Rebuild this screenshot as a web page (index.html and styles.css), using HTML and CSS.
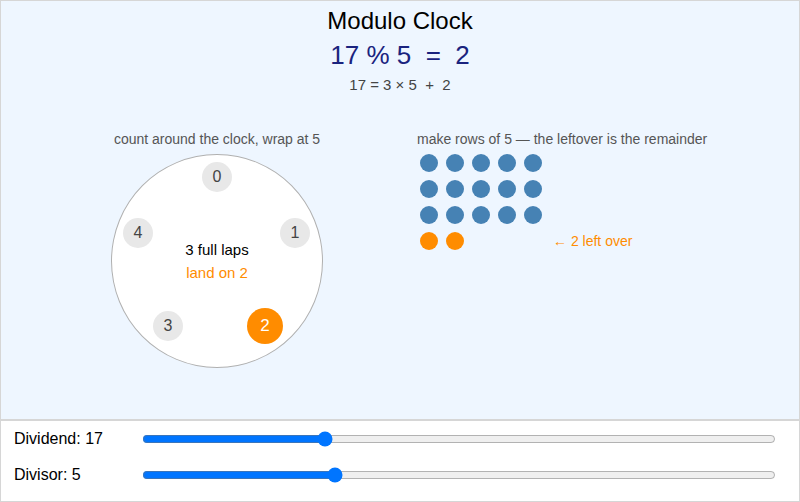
FILE: index.html
```html
<!DOCTYPE html>
<html lang="en">
<head>
    <meta charset="UTF-8">
    <meta name="viewport" content="width=device-width, initial-scale=1.0">
    <title>Modulo Clock</title>
    <link rel="stylesheet" href="styles.css">
</head>
<body>
    <div class="app">
        <div class="stage">
            <h1 class="title">Modulo Clock</h1>
            <div class="equation">17 % 5 &nbsp;= &nbsp;2</div>
            <div class="breakdown">17 = 3 × 5 &nbsp;+ &nbsp;2</div>

            <div class="columns">
                <div class="col clock-col">
                    <div class="caption">count around the clock, wrap at 5</div>
                    <div class="clock">
                        <div class="node n0">0</div>
                        <div class="node n1">1</div>
                        <div class="node n2 hit">2</div>
                        <div class="node n3">3</div>
                        <div class="node n4">4</div>
                        <div class="clock-center">
                            <div class="laps">3 full laps</div>
                            <div class="land">land on 2</div>
                        </div>
                    </div>
                </div>

                <div class="col rows-col">
                    <div class="caption">make rows of 5 — the leftover is the remainder</div>
                    <div class="dot-rows">
                        <div class="dot-row"><span class="dot"></span><span class="dot"></span><span class="dot"></span><span class="dot"></span><span class="dot"></span></div>
                        <div class="dot-row"><span class="dot"></span><span class="dot"></span><span class="dot"></span><span class="dot"></span><span class="dot"></span></div>
                        <div class="dot-row"><span class="dot"></span><span class="dot"></span><span class="dot"></span><span class="dot"></span><span class="dot"></span></div>
                        <div class="dot-row">
                            <div class="slots"><span class="dot extra"></span><span class="dot extra"></span></div>
                            <span class="leftover">← 2 left over</span>
                        </div>
                    </div>
                </div>
            </div>
        </div>

        <div class="controls">
            <label class="control">
                <span class="control-label">Dividend: 17</span>
                <input type="range" min="0" max="60" value="17">
            </label>
            <label class="control">
                <span class="control-label">Divisor: 5</span>
                <input type="range" min="2" max="12" value="5">
            </label>
        </div>
    </div>
</body>
</html>
```

FILE: styles.css
```css
:root {
    --stage-bg: #eef6ff;
    --frame: #d6d6d6;
    --navy: #1a237e;
    --muted: #555555;
    --orange: #ff8c00;
    --blue-dot: #4682b4;
    --node-bg: #e8e8e8;
}

* {
    box-sizing: border-box;
}

body {
    margin: 0;
    font-family: 'Liberation Sans', Arial, sans-serif;
    color: #000;
}

.app {
    width: 800px;
    height: 502px;
    border: 1px solid var(--frame);
    display: flex;
    flex-direction: column;
    overflow: hidden;
}

.stage {
    height: 418px;
    background-color: var(--stage-bg);
    text-align: center;
    padding-top: 7px;
}

.title {
    margin: 0;
    font-size: 24px;
    font-weight: normal;
    line-height: 26px;
}

.equation {
    margin-top: 6px;
    font-size: 26px;
    line-height: 30px;
    color: var(--navy);
}

.breakdown {
    margin-top: 6px;
    font-size: 15px;
    line-height: 18px;
    color: #444;
}

.columns {
    display: flex;
    gap: 90px;
    padding-left: 106px;
    margin-top: 37px;
    text-align: left;
}

.caption {
    font-size: 14px;
    line-height: 16px;
    color: var(--muted);
}

.clock-col {
    width: 220px;
    display: flex;
    flex-direction: column;
    align-items: center;
}

.clock {
    position: relative;
    width: 212px;
    height: 214px;
    margin-top: 7px;
    border: 1px solid #b0b0b0;
    border-radius: 50%;
    background-color: #fff;
}

.node {
    position: absolute;
    width: 30px;
    height: 30px;
    border-radius: 50%;
    background-color: var(--node-bg);
    color: #444;
    font-size: 16px;
    display: flex;
    align-items: center;
    justify-content: center;
}

.n0 { left: 90px; top: 7px; }
.n1 { left: 168px; top: 63px; }
.n2 { left: 135px; top: 153px; }
.n3 { left: 41px; top: 156px; }
.n4 { left: 11px; top: 63px; }

.node.hit {
    width: 36px;
    height: 36px;
    background-color: var(--orange);
    color: #fff;
    font-size: 17px;
}

.clock-center {
    height: 100%;
    display: flex;
    flex-direction: column;
    align-items: center;
    justify-content: center;
    gap: 5px;
    font-size: 15px;
    line-height: 18px;
}

.land {
    color: var(--orange);
}

.dot-rows {
    margin-top: 7px;
    padding-left: 3px;
    display: flex;
    flex-direction: column;
    gap: 8px;
}

.dot-row {
    display: flex;
    align-items: center;
    gap: 8px;
}

.slots {
    width: 122px;
    display: flex;
    gap: 8px;
}

.dot {
    width: 18px;
    height: 18px;
    border-radius: 50%;
    background-color: var(--blue-dot);
}

.dot.extra {
    background-color: var(--orange);
}

.leftover {
    margin-left: 3px;
    font-size: 14px;
    color: var(--orange);
}

.controls {
    flex: 1;
    border-top: 2px solid var(--frame);
    background-color: #fff;
    padding: 8px 23px 0 13px;
    display: flex;
    flex-direction: column;
    gap: 16px;
}

.control {
    display: flex;
    align-items: center;
    height: 20px;
    font-size: 16px;
}

.control-label {
    width: 128px;
}

.control input {
    flex: 1;
    margin: 0;
}
```
